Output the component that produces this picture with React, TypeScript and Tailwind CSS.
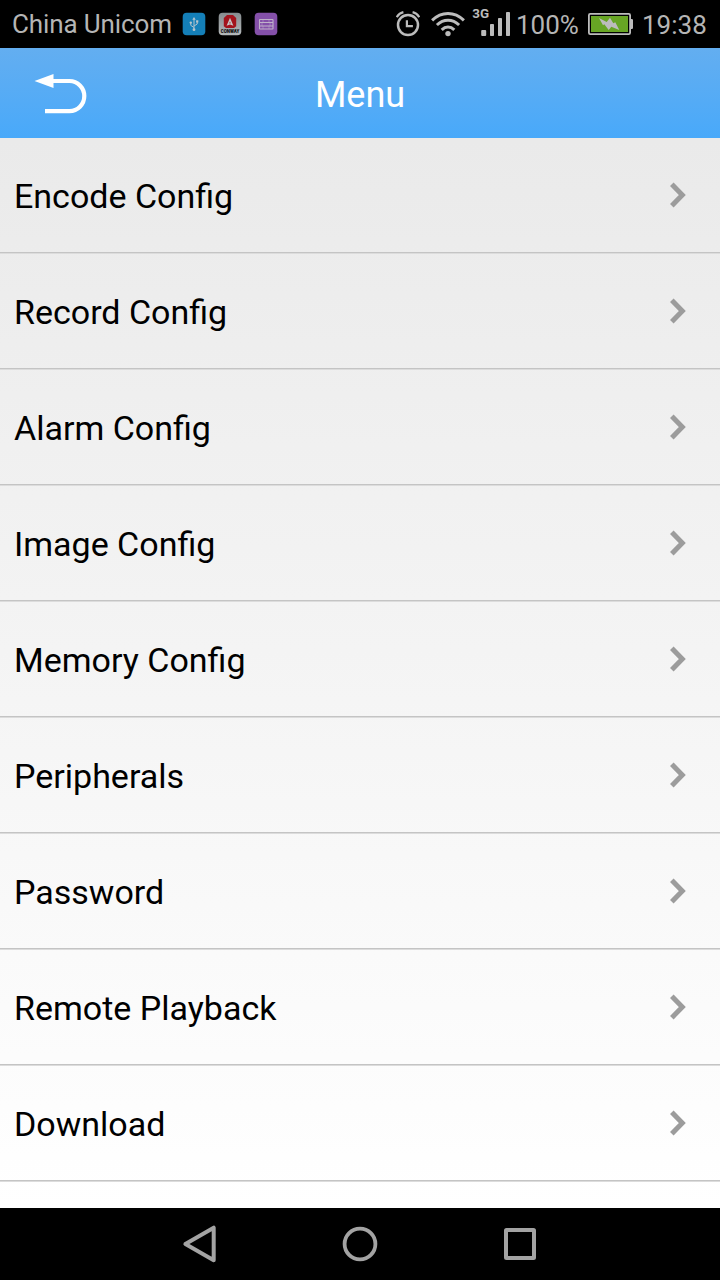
const items = [
  'Encode Config',
  'Record Config',
  'Alarm Config',
  'Image Config',
  'Memory Config',
  'Peripherals',
  'Password',
  'Remote Playback',
  'Download',
];

function UsbIcon() {
  return (
    <svg width="24" height="24" viewBox="0 0 24 24">
      <rect x="0.7" y="0.7" width="22.6" height="22.6" rx="4" fill="#147fb8" />
      <path d="M12 7v10M12 15.500L8.800 13.400V11M12 14l3.200-2V9.500" stroke="#b0c3cd" strokeWidth="1" fill="none" />
      <g fill="#b9c6cc">
        <path d="M12 5l1.700 2.800h-3.400z" />
        <circle cx="12" cy="17.700" r="1.400" />
        <circle cx="8.800" cy="10.600" r="1.200" />
        <rect x="14.100" y="8.300" width="2.200" height="2.200" />
      </g>
    </svg>
  );
}

function ConwayIcon() {
  return (
    <svg width="24" height="24" viewBox="0 0 24 24">
      <defs>
        <linearGradient id="silver" x1="0" y1="0" x2="0" y2="1">
          <stop offset="0" stopColor="#868c8f" />
          <stop offset="1" stopColor="#b4b8ba" />
        </linearGradient>
      </defs>
      <rect x="0.7" y="0.7" width="22.6" height="22.6" rx="4" fill="url(#silver)" />
      <path d="M9 3h6l3.200 3v8.300L16 16H8l-2.200-1.700V6z" fill="#a3131c" />
      <path d="M12 5.800l3.400 8L12 12.600l-3.400 1.200z" fill="#c6c6c6" />
      <path d="M12 9.500l.8 2-.8-.3-.8.3z" fill="#a3131c" />
      <text
        x="12"
        y="21.4"
        textAnchor="middle"
        textLength="18.5"
        lengthAdjust="spacingAndGlyphs"
        fontFamily="Roboto, sans-serif"
        fontSize="5.2"
        fontWeight="900"
        fill="#0a0a0a"
      >
        CONWAY
      </text>
    </svg>
  );
}

function ArchiveIcon() {
  return (
    <svg width="24" height="24" viewBox="0 0 24 24" fill="none">
      <rect x="0.7" y="0.7" width="22.6" height="22.6" rx="4" fill="#8450a9" />
      <path d="M9 7.500v3M15 7.500v3M8 10.500v3.500M16 10.500v3.500M9 14v3M15 14v3" stroke="#9f7bbb" strokeWidth="1" />
      <path d="M5.500 10.500h13.500M5.500 14h13.500" stroke="#bfb2c9" strokeWidth="1" />
      <rect x="5.500" y="7.500" width="13.500" height="9.500" rx="0.5" stroke="#bfb2c9" strokeWidth="1.100" />
    </svg>
  );
}

function AlarmIcon() {
  return (
    <svg width="24" height="27" viewBox="0 0 24 27" fill="none" stroke="#bcbcbc">
      <circle cx="12" cy="15" r="10" strokeWidth="2.5" />
      <path d="M10.9 10.3v5.8h6" strokeWidth="2.2" />
      <path d="M.7 7.1Q3.2 3.1 7.4 2.2M23.3 7.1Q20.8 3.1 16.6 2.2" strokeWidth="2.2" />
    </svg>
  );
}

function WifiIcon() {
  return (
    <svg width="34" height="26" viewBox="0 0 34 26" fill="none" stroke="#bcbcbc" strokeWidth="3">
      <path d="M1.1 9.3Q8.2 2.4 17 2.4T32.9 9.3" />
      <path d="M5.9 14Q10.8 9.3 17 9.3T28.1 14" />
      <path d="M10.7 18.8Q13.6 16 17 16t6.3 2.8" />
      <circle cx="17" cy="22.6" r="2.7" fill="#bcbcbc" stroke="none" />
    </svg>
  );
}

function SignalIcon() {
  return (
    <svg width="39" height="34" viewBox="0 -4 39 34" fill="#bcbcbc">
      <text
        x="0.3"
        y="10"
        textLength="16.8"
        lengthAdjust="spacingAndGlyphs"
        fontFamily="Roboto, sans-serif"
        fontSize="13"
        fontWeight="700"
      >
        3G
      </text>
      <rect x="9.2" y="22" width="5" height="6" rx="1" />
      <rect x="18" y="16" width="4" height="12" rx="0.8" />
      <rect x="26" y="10" width="4" height="18" rx="0.8" />
      <rect x="34" y="4" width="4" height="24" rx="0.8" />
    </svg>
  );
}

function BatteryIcon() {
  return (
    <svg width="45" height="22" viewBox="0 0 45 22">
      <rect x="0.9" y="0.9" width="41.2" height="20.2" rx="1.3" fill="#000" stroke="#bcbcbc" strokeWidth="1.8" />
      <rect x="3" y="3" width="37" height="16" fill="#67a524" />
      <path d="M43 6h1.200l.8.8v8.400l-.8.8H43z" fill="#bcbcbc" />
      <path
        d="M11 5L18.700 9L22 4.700L25.300 10.300L27.300 9.300L31.300 17L23.300 13.700L20.700 17L16.300 11.300L15 12.300z"
        fill="#bcbcbc"
      />
    </svg>
  );
}

function StatusBar() {
  return (
    <header className="flex h-12 shrink-0 items-center justify-between bg-black pl-3 pr-[13px] text-[26px] leading-[30px] text-[#b5b5b5]">
      <div className="flex items-center">
        <span className="w-[170px] whitespace-nowrap tracking-[-0.12px]">China Unicom</span>
        <div className="flex gap-3">
          <UsbIcon />
          <ConwayIcon />
          <ArchiveIcon />
        </div>
      </div>
      <div className="flex items-center">
        <div className="-mt-[2px]">
          <AlarmIcon />
        </div>
        <div className="ml-[11px]">
          <WifiIcon />
        </div>
        <div className="-mt-[6px] ml-[7px]">
          <SignalIcon />
        </div>
        <span className="ml-[5px] w-[72px] pt-[2px]">100%</span>
        <BatteryIcon />
        <span className="ml-[9px] w-[65px] pt-[2px]">19:38</span>
      </div>
    </header>
  );
}

function TitleBar() {
  return (
    <div className="grid h-[90px] shrink-0 grid-cols-[1fr_auto_1fr] items-center bg-linear-to-b from-[#63aef0] to-[#48a9fa] text-white">
      <button aria-label="Back" className="ml-[34px] w-[54px] pt-[2px]">
        <svg width="54" height="42" viewBox="0 0 54 42" fill="none">
          <path d="M.5 8L19.500 1v14z" fill="#fff" />
          <path d="M18 8h17.500a14.800 15.100 0 0 1 0 30.200H11" stroke="#fff" strokeWidth="4.200" />
        </svg>
      </button>
      <h1 className="pt-1 text-[36px] leading-[42px]">Menu</h1>
      <span />
    </div>
  );
}

function MenuRow({ label }: { label: string }) {
  return (
    <li className="flex h-[116px] shrink-0 flex-col">
      <button className="flex flex-1 items-center justify-between pl-[14px] pr-[33px] text-left text-[34px] leading-10 text-black">
        <span className="pt-px">{label}</span>
        <svg width="18" height="26" viewBox="0 0 18 26" fill="none" className="mb-px">
          <path d="M2.800 2.300L13.300 13 2.800 23.700" stroke="#9c9c9c" strokeWidth="5" />
        </svg>
      </button>
      <div className="h-px bg-[#c4c4c4]" />
      <div className="h-px bg-[#dcdcdc]" />
    </li>
  );
}

function NavBar() {
  return (
    <nav className="flex h-[72px] shrink-0 items-center justify-center gap-[120px] bg-black">
      <svg width="40" height="40" viewBox="0 0 40 40" fill="none" stroke="#a3a3a3" strokeWidth="4" strokeLinejoin="round">
        <path d="M5.400 20L33.700 3.700v32.600z" />
      </svg>
      <svg width="40" height="40" viewBox="0 0 40 40" fill="none" stroke="#a3a3a3" strokeWidth="3.800">
        <circle cx="20" cy="20" r="15.400" />
      </svg>
      <svg width="40" height="40" viewBox="0 0 40 40" fill="none" stroke="#a3a3a3" strokeWidth="4">
        <rect x="6" y="6" width="28" height="28" rx="0.5" strokeLinejoin="round" />
      </svg>
    </nav>
  );
}

export default function App() {
  return (
    <div className="flex h-[1280px] w-[720px] flex-col overflow-hidden bg-black font-['Roboto',sans-serif]">
      <StatusBar />
      <TitleBar />
      <ul className="flex min-h-0 flex-1 flex-col overflow-hidden bg-linear-to-b from-[#eaeaea] to-white">
        {items.map((label) => (
          <MenuRow key={label} label={label} />
        ))}
      </ul>
      <NavBar />
    </div>
  );
}
